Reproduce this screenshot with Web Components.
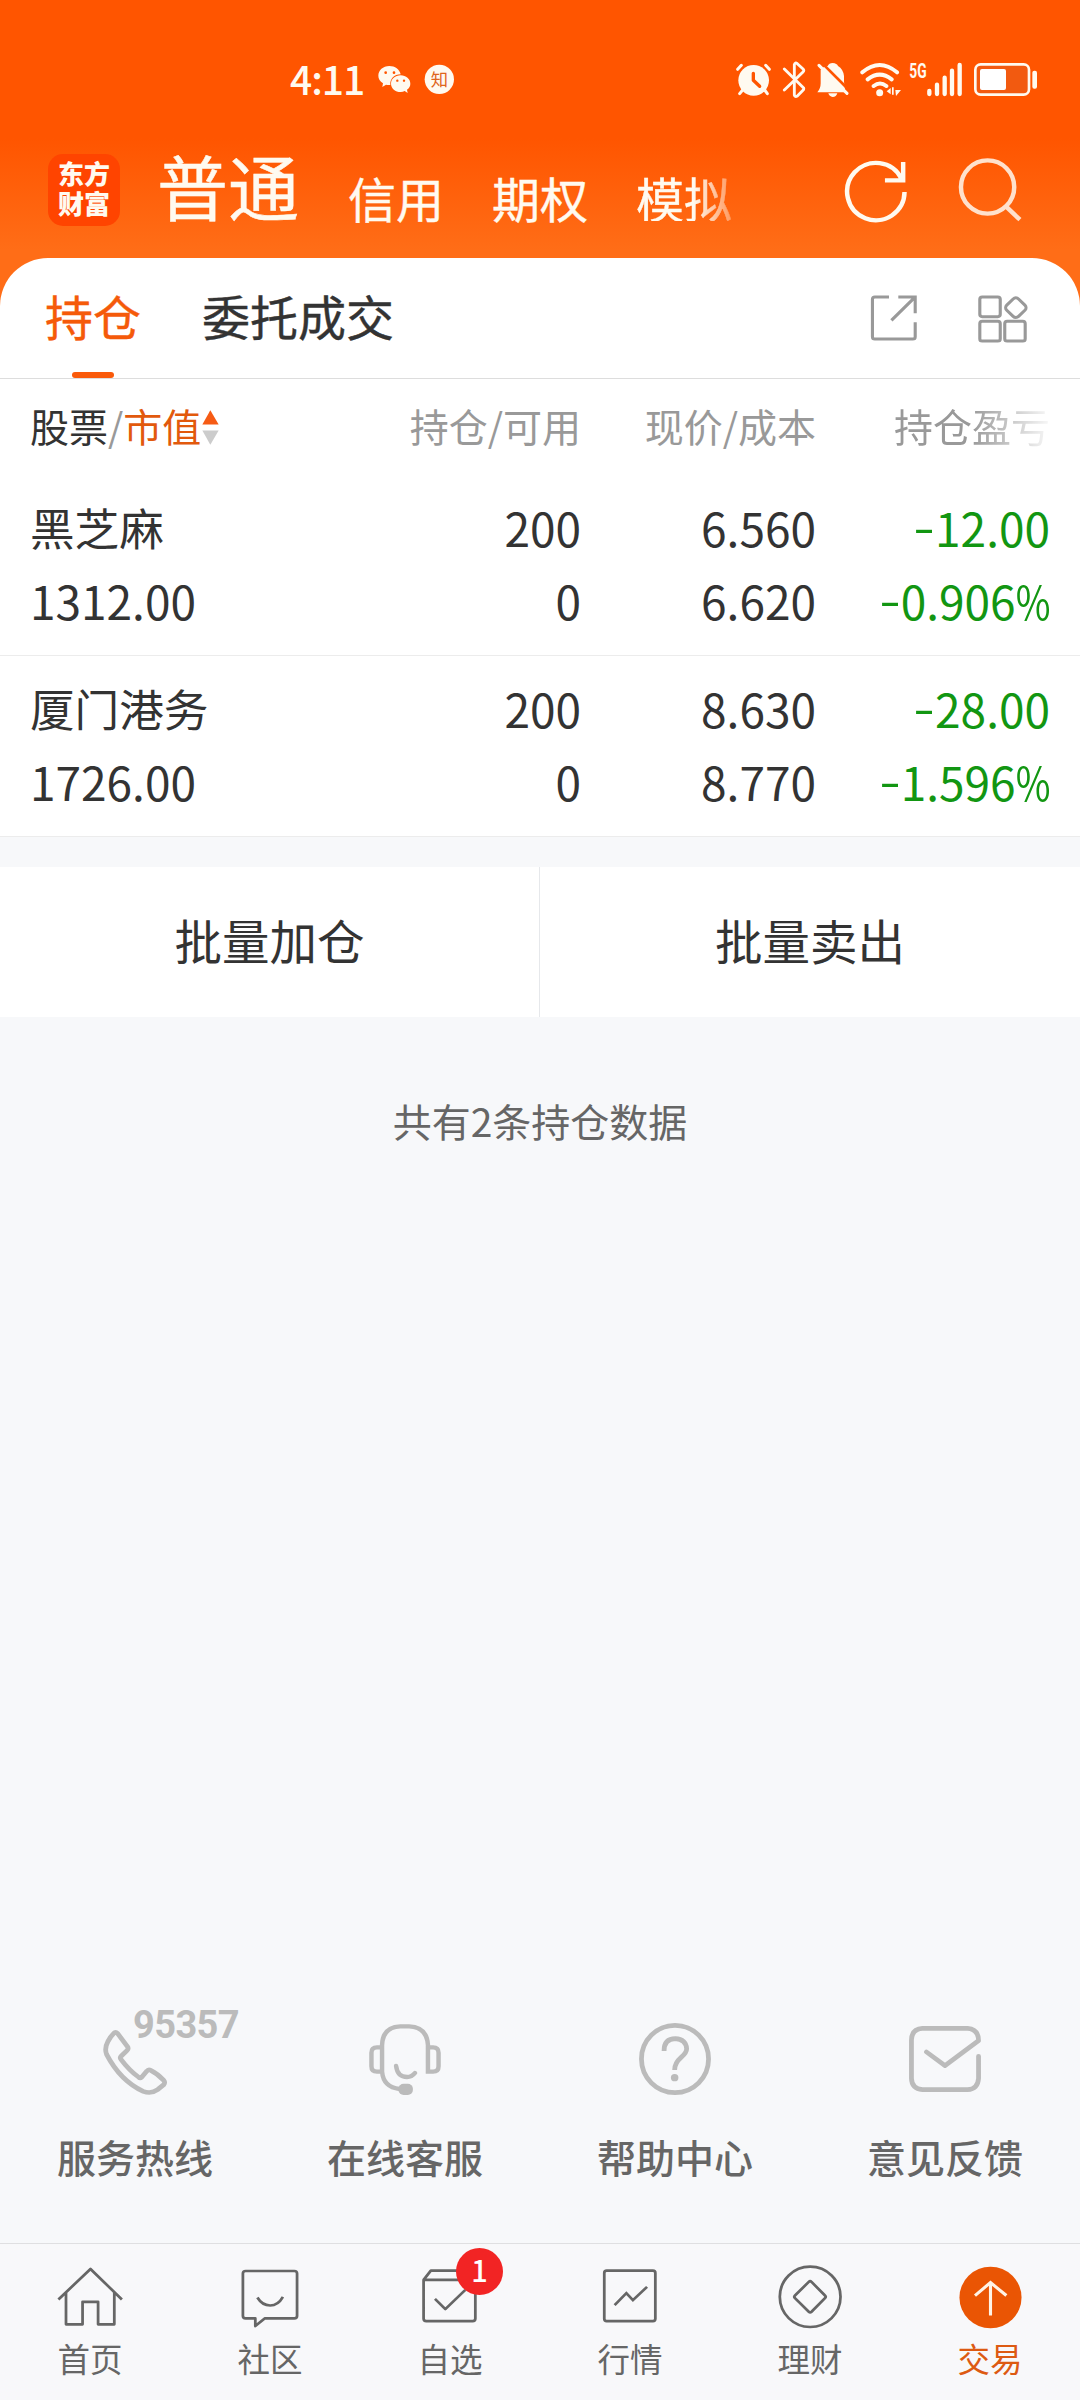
<!DOCTYPE html>
<html lang="zh-CN">
<head>
<meta charset="UTF-8">
<title>交易 - 持仓</title>
<style>
    body{
        margin: 0;
        width: 1080px;
        background-color: #f7f8fa;
        font-family: "Noto Sans CJK SC", sans-serif;
        color: #333;
    }
</style>
</head>
<body>
<trade-page></trade-page>

<script>
// 图标表: box 是 viewBox, size 是页面上的宽高
const icons = {
    wechat: {box: '321 60 105 120', size: [35, 40], body: `
        <path fill="#fffaf0" d="M358 78C339 78 325 91 325 107C325 117 330 124 339 130L337 141L348 134Q354 136 361 135C359 117 373 103 392 103C389 88 375 78 358 78Z"/>
        <path fill="#fffaf0" d="M392 106C375 106 363 117 363 131C363 145 376 156 392 156Q399 156 404 153L413 159L411 149C418 144 421 138 421 131C421 117 408 106 392 106Z"/>
        <g fill="#ff5500"><circle cx="347" cy="98" r="4"/><circle cx="372" cy="98" r="4"/><circle cx="382" cy="122" r="3.5"/><circle cx="402" cy="122" r="3.5"/></g>`},
    zhi: {box: '462 60 93 120', size: [31, 40], body: `
        <circle cx="508" cy="118" r="44" fill="#fffaf0"/>
        <text x="508" y="137" font-size="52" text-anchor="middle" fill="#e0651c">知</text>`},
    alarm: {box: '45 60 111 120', size: [37, 40], body: `
        <circle cx="101" cy="121" r="46" fill="#fffaf0"/>
        <path stroke="#fffaf0" stroke-width="9" stroke-linecap="round" d="M53 88L64 76M137 76L148 88M68 150L59 161M134 150L142 161"/>
        <path fill="none" stroke="#ff5500" stroke-width="10" stroke-linecap="round" stroke-linejoin="round" d="M100 100V121L119 139"/>`},
    bluetooth: {box: '186 60 72 120', size: [24, 40], body: `
        <path fill="none" stroke="#fffaf0" stroke-width="8.5" stroke-linecap="round" stroke-linejoin="round" d="M193 87L251 144Q252 148 249 151L232 168Q225 172 223 165V74Q225 66 232 71L250 88Q253 92 249 96L193 150"/>`},
    mute: {box: '291 60 99 120', size: [33, 40], body: `
        <path fill="#fffaf0" d="M305 90Q312 80 326 78Q330 69 341 69Q354 70 357 78Q373 88 375 108V125L379 157H295Q305 146 305 130Z"/>
        <path fill="#fffaf0" d="M328 160H355Q352 171 341 171Q331 170 328 160Z"/>
        <path stroke="#ff5500" stroke-width="8" d="M304 64L398 158"/>
        <path stroke="#fffaf0" stroke-width="9" stroke-linecap="round" d="M300 76L384 160"/>`},
    wifi: {box: '414 60 129 120', size: [43, 40], body: `
        <path fill="none" stroke="#fffaf0" stroke-width="12" stroke-linecap="round" d="M424 97Q476 53 528 97M440 118Q476 90 512 118M458 138Q477 123 496 138"/>
        <circle cx="476" cy="158" r="10.5" fill="#fffaf0"/>
        <path fill="#fffaf0" d="M497 154L509 144V163ZM513 142H518V164H513ZM523 150H540L525 168Z"/>`},
    signal: {box: '561 60 165 120', size: [55, 40], body: `
        <text x="565" y="113" font-family="Roboto, sans-serif" font-weight="700" font-size="61" textLength="52" lengthAdjust="spacingAndGlyphs" fill="#fffaf0">5G</text>
        <path stroke="#fffaf0" stroke-width="13" stroke-linecap="round" d="M625 153V162M648 134V162M671 113V162M693 92V162M716 75V162"/>`},
    battery: {box: '759 60 195 120', size: [65, 40], body: `
        <rect x="766" y="73" width="161" height="91" rx="16" fill="#f25a10" stroke="#fffaf0" stroke-width="8"/>
        <rect x="780" y="87" width="78" height="63" rx="6" fill="#fff"/>
        <rect x="937" y="92" width="14" height="54" rx="6" fill="#fffaf0"/>`},
    refresh: {box: '880 105 192 210', size: [66, 70], body: `
        <path fill="none" stroke="#fffaf0" stroke-width="13" d="M1059 216A83.500 86 0 1 1 1050 176M1055 126V181H1002"/>`},
    search: {box: '1209 105 192 210', size: [66, 70], body: `
        <g fill="none" stroke="#ffe1cc" stroke-width="13"><ellipse cx="1298" cy="201" rx="77.500" ry="80"/><path d="M1349 257L1392 299"/></g>`},
    share: {box: '956 516 145 153', size: [50, 51], body: `
        <path fill="none" stroke="#999" stroke-width="9" d="M1014 531H973Q966 531 966 538V650Q966 657 973 657H1083Q1090 657 1090 650V607M1041 531H1090V580M1021 601L1088 533"/>`},
    modules: {box: '1265 516 153 159', size: [53, 53], body: `
        <g fill="none" stroke="#999" stroke-width="9"><rect x="1276" y="531" width="59" height="59" rx="7"/><rect x="1276" y="604" width="59" height="59" rx="7"/><rect x="1348" y="604" width="59" height="59" rx="7"/><rect x="1356" y="539" width="48" height="48" rx="11" transform="rotate(45 1380 563)"/></g>`},
    sort: {box: '586 122 49 110', size: [17, 37], body: `
        <path fill="#f65b14" d="M610 126L634 168H587Z"/><path fill="#ccc" d="M587 186H634L610 228Z"/>`},
    phone: {box: '281 120 222 234', size: [76, 78], body: `
        <path fill="none" stroke="#bbb" stroke-width="14" stroke-linejoin="round" d="M330 160Q335 154 341 160L370 200Q374 206 369 211L352 228Q347 233 351 238Q375 271 402 291Q407 296 412 291L426 274Q431 267 438 271Q458 281 476 301Q481 308 476 314L458 329Q439 343 416 334Q349 302 309 223Q302 205 313 184Q320 170 330 160Z"/>`},
    headset: {box: '1065 120 222 234', size: [76, 78], body: `
        <g fill="none" stroke="#bbb" stroke-width="13" stroke-linecap="round"><path d="M1160 327Q1113 322 1109 275V195Q1111 141 1162 139H1188Q1240 141 1243 195V275H1258Q1274 275 1274 259V218Q1274 202 1258 202H1243M1109 202H1094Q1078 202 1078 218V259Q1078 275 1094 275H1109M1150 258Q1154 291 1182 291Q1196 291 1205 279"/></g>
        <rect x="1157" y="311" width="42" height="34" rx="15" fill="#bbb"/>`},
    help: {box: '281 120 222 234', size: [76, 78], body: `
        <g fill="none" stroke="#bbb" stroke-width="14"><ellipse cx="392" cy="237" rx="98" ry="101"/><path d="M360 213Q360 176 393 176Q424 178 426 206Q426 217 411 231Q390 250 391 270"/></g>
        <circle cx="391" cy="293" r="11" fill="#bbb"/>`},
    feedback: {box: '1065 120 222 234', size: [76, 78], body: `
        <path fill="none" stroke="#bbb" stroke-width="14" stroke-linecap="round" stroke-linejoin="round" d="M1274 229V295Q1272 327 1242 329H1110Q1079 326 1078 295V180Q1079 147 1110 145H1242Q1274 148 1274 182L1176 257L1122 216"/>`},
    home: {box: '161 130 200 205', size: [69, 68], body: `
        <path fill="none" stroke="#666" stroke-width="8" stroke-linejoin="round" d="M168 240L261 148L352 240M190 220V315H238V247H283V315H330V220"/>`},
    community: {box: '684 130 200 205', size: [69, 68], body: `
        <path fill="none" stroke="#666" stroke-width="8" stroke-linejoin="round" d="M712 154H853Q861 154 861 162V290Q861 297 853 297H767L740 320V297H712Q704 297 704 290V162Q704 154 712 154ZM746 234Q760 258 783 258Q806 258 820 232"/>`},
    favorite: {box: '1207 130 200 205', size: [69, 68], body: `
        <path fill="none" stroke="#666" stroke-width="8" stroke-linejoin="round" d="M1229 181V297Q1229 305 1237 305H1371Q1379 305 1379 297V181ZL1250 153H1356L1379 180M1262 238L1292 269L1350 211"/>`},
    market: {box: '161 130 200 205', size: [69, 68], body: `
        <g fill="none" stroke="#666" stroke-width="8"><rect x="185" y="153" width="148" height="152" rx="7"/><path d="M215 257L249 221L268 242L309 202"/></g>`},
    wealth: {box: '684 130 200 205', size: [69, 68], body: `
        <g fill="none" stroke="#666" stroke-width="8" stroke-linejoin="round"><ellipse cx="783" cy="232" rx="88" ry="91"/><path d="M779 187Q783 183 787 187L826 228Q830 232 826 236L787 277Q783 281 779 277L739 236Q735 232 739 228Z"/></g>`},
    trade: {box: '1207 130 200 205', size: [69, 68], body: `
        <ellipse cx="1307" cy="234" rx="90" ry="93" fill="#ea5504"/>
        <path fill="none" stroke="#fff3e6" stroke-width="9" d="M1307 288V188M1262 228L1307 189L1353 228"/>`}
};

class appIcon extends HTMLElement{
    constructor(){
        super();
        this.attachShadow({mode: "open"});
    }

    connectedCallback(){
        const icon = icons[this.getAttribute('name')];
        this.shadowRoot.innerHTML = `
            <style>
                :host{
                    display: block;
                    flex: none;
                }

                svg{
                    display: block;
                }
            </style>
            <svg width="${icon.size[0]}" height="${icon.size[1]}" viewBox="${icon.box}" preserveAspectRatio="none">${icon.body}</svg>
        `;
    }
}

class statusBar extends HTMLElement{
    constructor(){
        super();
        this.attachShadow({mode: "open"});
    }

    connectedCallback(){
        this.shadowRoot.innerHTML = `
            <style>
                :host{
                    display: flex;
                    align-items: center;
                    height: 40px;
                    padding: 60px 42px 20px 290px;
                    color: #fffaf0;
                }

                .time{
                    width: 87px;
                    margin-top: -5px;
                    font-size: 39px;
                    line-height: 40px;
                    font-weight: 500;
                    letter-spacing: -1px;
                }

                .left{
                    display: flex;
                    gap: 12px;
                    flex: 1;
                }

                .right{
                    display: flex;
                    gap: 10px;
                }

                .right app-icon[name="wifi"]{
                    margin-right: -4px;
                }
            </style>
            <span class="time">4:11</span>
            <div class="left">
                <app-icon name="wechat"></app-icon>
                <app-icon name="zhi"></app-icon>
            </div>
            <div class="right">
                <app-icon name="alarm"></app-icon>
                <app-icon name="bluetooth"></app-icon>
                <app-icon name="mute"></app-icon>
                <app-icon name="wifi"></app-icon>
                <app-icon name="signal"></app-icon>
                <app-icon name="battery"></app-icon>
            </div>
        `;
    }
}

// 账户切换栏
class accountBar extends HTMLElement{
    constructor(){
        super();
        this.attachShadow({mode: "open"});
    }

    connectedCallback(){
        this.shadowRoot.innerHTML = `
            <style>
                :host{
                    display: flex;
                    align-items: flex-start;
                    box-sizing: border-box;
                    height: 138px;
                    padding: 28px 57px 0 48px;
                    color: #fffaf0;
                }

                .logo{
                    width: 72px;
                    height: 72px;
                    box-sizing: border-box;
                    margin: 6px 37px 0 0;
                    padding-top: 4px;
                    border-radius: 15px;
                    background-color: #ff4400;
                    font-size: 26px;
                    line-height: 30px;
                    font-weight: 900;
                    text-align: center;
                }

                .current{
                    font-size: 71px;
                    line-height: 72px;
                    -webkit-text-stroke: .5px #fffaf0;
                }

                .others{
                    display: flex;
                    gap: 48px;
                    flex: 1;
                    margin: 25px 0 0 49px;
                    font-size: 48px;
                    line-height: 48px;
                    -webkit-text-stroke: .4px #fffaf0;
                }

                .fade{
                    -webkit-mask-image: linear-gradient(90deg, #000 60%, rgba(0,0,0,.35));
                    mask-image: linear-gradient(90deg, #000 60%, rgba(0,0,0,.35));
                }

                .tools{
                    display: flex;
                    gap: 48px;
                    margin-top: 7px;
                }
            </style>
            <div class="logo">东方<br>财富</div>
            <div class="current">普通</div>
            <div class="others">
                <span>信用</span>
                <span>期权</span>
                <span class="fade">模拟</span>
            </div>
            <div class="tools">
                <app-icon name="refresh"></app-icon>
                <app-icon name="search"></app-icon>
            </div>
        `;
    }
}

class holdingTabs extends HTMLElement{
    constructor(){
        super();
        this.attachShadow({mode: "open"});
    }

    connectedCallback(){
        this.shadowRoot.innerHTML = `
            <style>
                :host{
                    display: flex;
                    align-items: stretch;
                    box-sizing: border-box;
                    height: 121px;
                    padding: 0 51px 0 45px;
                    border-bottom: 1px solid #ddd;
                    border-radius: 48px 48px 0 0;
                    background-color: #fff;
                    font-size: 48px;
                    line-height: 48px;
                }

                .tab{
                    display: flex;
                    flex-direction: column;
                    align-items: center;
                    padding-top: 33px;
                    margin-right: 61px;
                    -webkit-text-stroke: .4px currentColor;
                }

                .active{
                    color: #f55a0a;
                }

                .active::after{
                    content: "";
                    width: 42px;
                    height: 6px;
                    margin-top: auto;
                    border-radius: 3px;
                    background-color: #fa5a0a;
                }

                .tools{
                    display: flex;
                    gap: 57px;
                    margin: 34px 0 0 auto;
                }
            </style>
            <div class="tab active">持仓</div>
            <div class="tab">委托成交</div>
            <div class="tools">
                <app-icon name="share"></app-icon>
                <app-icon name="modules"></app-icon>
            </div>
        `;
    }
}

class listHead extends HTMLElement{
    constructor(){
        super();
        this.attachShadow({mode: "open"});
    }

    connectedCallback(){
        this.shadowRoot.innerHTML = `
            <style>
                :host{
                    display: grid;
                    grid-template-columns: 270px 1fr 235px 235px;
                    align-items: center;
                    box-sizing: border-box;
                    height: 96px;
                    padding: 0 29px 4px 30px;
                    background-color: #fff;
                    font-size: 39px;
                    line-height: 50px;
                    color: #999;
                    text-align: right;
                }

                .first{
                    display: flex;
                    align-items: center;
                }

                .dark{
                    color: #333;
                }

                .sorted{
                    color: #e2590c;
                }

                app-icon{
                    margin: 4px 0 0 1px;
                }

                .fade{
                    padding-right: 1px;
                    -webkit-mask-image: linear-gradient(90deg, #000 66%, rgba(0,0,0,.05));
                    mask-image: linear-gradient(90deg, #000 66%, rgba(0,0,0,.05));
                }
            </style>
            <div class="first"><span class="dark">股票</span>/<span class="sorted">市值</span><app-icon name="sort"></app-icon></div>
            <span>持仓/可用</span>
            <span>现价/成本</span>
            <span class="fade">持仓盈亏</span>
        `;
    }
}

class stockRow extends HTMLElement{
    constructor(){
        super();
        this.attachShadow({mode: "open"});
    }

    // 负号加宽, 百分号收窄
    format(text){
        return text.replace('-', '<i>-</i>').replace('%', '<b>%</b>');
    }

    connectedCallback(){
        const get = (attr) => this.getAttribute(attr);
        this.shadowRoot.innerHTML = `
            <style>
                :host{
                    display: grid;
                    grid-template-columns: 270px 1fr 235px 235px;
                    grid-template-rows: 73px 73px;
                    box-sizing: border-box;
                    height: 181px;
                    padding: 16px 29px 0 30px;
                    border-bottom: 1px solid #ececec;
                    background-color: #fff;
                    font-size: 46px;
                    line-height: 73px;
                    text-align: right;
                }

                .name, .value{
                    text-align: left;
                }

                .name{
                    margin-top: -1px;
                    font-size: 44.600px;
                }

                .profit{
                    padding-right: 1px;
                    color: #129612;
                }

                i, b{
                    display: inline-block;
                    font-style: normal;
                    font-weight: inherit;
                }

                i{
                    transform: translateY(-3px) scaleX(1.35);
                    margin-right: 3px;
                }

                b{
                    transform: scaleX(.82);
                    transform-origin: right;
                    margin-left: -8px;
                }
            </style>
            <span class="name">${get('name')}</span>
            <span>${get('hold')}</span>
            <span>${get('price')}</span>
            <span class="profit">${this.format(get('profit'))}</span>
            <span class="value">${get('value')}</span>
            <span>${get('usable')}</span>
            <span>${get('cost')}</span>
            <span class="profit">${this.format(get('rate'))}</span>
        `;
    }
}

class batchActions extends HTMLElement{
    constructor(){
        super();
        this.attachShadow({mode: "open"});
    }

    connectedCallback(){
        this.shadowRoot.innerHTML = `
            <style>
                :host{
                    display: grid;
                    grid-template-columns: 1fr 1fr;
                    height: 150px;
                    margin-top: 30px;
                    background-color: #fff;
                    font-size: 47.500px;
                    line-height: 145px;
                    text-align: center;
                }

                .buy{
                    border-right: 1px solid #e6e8eb;
                }
            </style>
            <div class="buy">批量加仓</div>
            <div class="sell">批量卖出</div>
        `;
    }
}

class serviceItem extends HTMLElement{
    constructor(){
        super();
        this.attachShadow({mode: "open"});
    }

    connectedCallback(){
        const tip = this.getAttribute('tip');
        this.shadowRoot.innerHTML = `
            <style>
                :host{
                    display: flex;
                    flex-direction: column;
                    align-items: center;
                    position: relative;
                    color: #666;
                    font-size: 39px;
                    line-height: 50px;
                    font-weight: 500;
                }

                .tip{
                    position: absolute;
                    left: 133px;
                    top: -14px;
                    font-family: Roboto, sans-serif;
                    font-size: 38px;
                    line-height: 38px;
                    font-weight: 700;
                    letter-spacing: -.6px;
                    color: #bbb;
                }

                .label{
                    margin-top: 33px;
                }
            </style>
            <app-icon name="${this.getAttribute('icon')}"></app-icon>
            ${tip ? `<span class="tip">${tip}</span>` : ''}
            <span class="label"><slot></slot></span>
        `;
    }
}

class navItem extends HTMLElement{
    constructor(){
        super();
        this.attachShadow({mode: "open"});
    }

    connectedCallback(){
        const badge = this.getAttribute('badge');
        this.shadowRoot.innerHTML = `
            <style>
                :host{
                    display: flex;
                    flex-direction: column;
                    align-items: center;
                    position: relative;
                    padding-top: 19px;
                    font-size: 32.500px;
                    line-height: 40px;
                    color: #666;
                }

                :host([active]){
                    color: #dd5a12;
                }

                .label{
                    margin-top: 7px;
                }

                .badge{
                    position: absolute;
                    left: 96px;
                    top: 4px;
                    width: 47px;
                    height: 47px;
                    border-radius: 50%;
                    background-color: #f22424;
                    color: #fff;
                    font-size: 29px;
                    line-height: 43px;
                    font-weight: 500;
                    text-align: center;
                }
            </style>
            <app-icon name="${this.getAttribute('icon')}"></app-icon>
            ${badge ? `<span class="badge">${badge}</span>` : ''}
            <span class="label"><slot></slot></span>
        `;
    }
}

class tradePage extends HTMLElement{
    constructor(){
        super();
        this.attachShadow({mode: "open"});
    }

    connectedCallback(){
        this.shadowRoot.innerHTML = `
            <style>
                :host{
                    display: flex;
                    flex-direction: column;
                    width: 1080px;
                    height: 2400px;
                    overflow: hidden;
                }

                .top{
                    background: linear-gradient(#ff5500 138px, #ff6d17 250px);
                }

                .count{
                    margin-top: 77px;
                    font-size: 39px;
                    line-height: 52px;
                    text-align: center;
                    color: #666;
                }

                .services{
                    display: grid;
                    grid-template-columns: repeat(4, 1fr);
                    height: 223px;
                    margin-top: auto;
                }

                nav{
                    display: grid;
                    grid-template-columns: repeat(6, 1fr);
                    height: 156px;
                    border-top: 1px solid #dfdfe1;
                    background-color: #f8f8fa;
                }
            </style>
            <div class="top">
                <status-bar></status-bar>
                <account-bar></account-bar>
                <holding-tabs></holding-tabs>
            </div>
            <list-head></list-head>
            <stock-row name="黑芝麻" value="1312.00" hold="200" usable="0" price="6.560" cost="6.620" profit="-12.00" rate="-0.906%"></stock-row>
            <stock-row name="厦门港务" value="1726.00" hold="200" usable="0" price="8.630" cost="8.770" profit="-28.00" rate="-1.596%"></stock-row>
            <batch-actions></batch-actions>
            <div class="count">共有2条持仓数据</div>
            <div class="services">
                <service-item icon="phone" tip="95357">服务热线</service-item>
                <service-item icon="headset">在线客服</service-item>
                <service-item icon="help">帮助中心</service-item>
                <service-item icon="feedback">意见反馈</service-item>
            </div>
            <nav>
                <nav-item icon="home">首页</nav-item>
                <nav-item icon="community">社区</nav-item>
                <nav-item icon="favorite" badge="1">自选</nav-item>
                <nav-item icon="market">行情</nav-item>
                <nav-item icon="wealth">理财</nav-item>
                <nav-item icon="trade" active>交易</nav-item>
            </nav>
        `;
    }
}

customElements.define("app-icon", appIcon);
customElements.define("status-bar", statusBar);
customElements.define("account-bar", accountBar);
customElements.define("holding-tabs", holdingTabs);
customElements.define("list-head", listHead);
customElements.define("stock-row", stockRow);
customElements.define("batch-actions", batchActions);
customElements.define("service-item", serviceItem);
customElements.define("nav-item", navItem);
customElements.define("trade-page", tradePage);
</script>
</body>
</html>
